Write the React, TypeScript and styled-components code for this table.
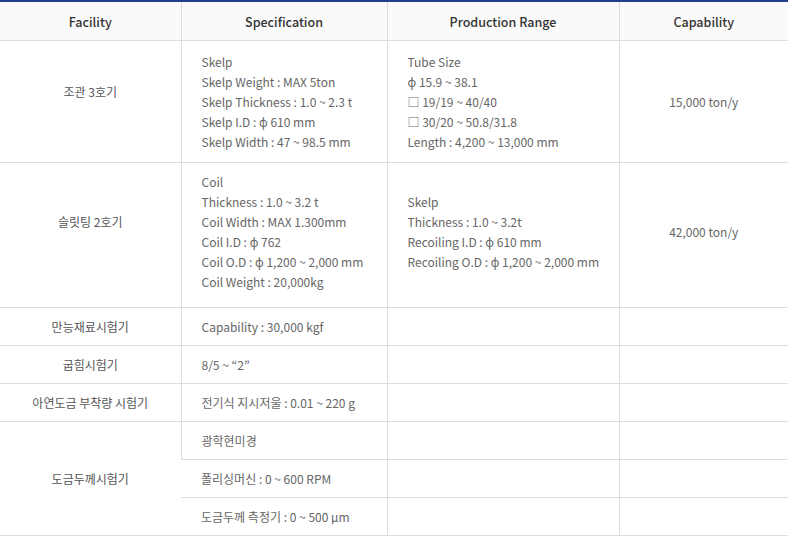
import React from "react";
import styled, { createGlobalStyle } from "styled-components";

const GlobalStyle = createGlobalStyle`
  html, body { margin: 0; padding: 0; background: #fff; }
  body { font-family: "Noto Sans CJK KR", "Noto Sans", sans-serif; }
`;

const Table = styled.table`
  width: 788px;
  border-collapse: collapse;
  table-layout: fixed;
  border-top: 2px solid #203f92;
  font-family: "Noto Sans CJK KR", "Noto Sans", sans-serif;
  font-size: 12px;
  color: #666;
`;

const Th = styled.th`
  height: 38px;
  padding: 0;
  background: #fafafa;
  color: #333;
  font-size: 12.5px;
  font-weight: 500;
  text-align: center;
  vertical-align: middle;
  border-bottom: 1px solid #ddd;
  border-left: 1px solid #ddd;
  &:first-child { border-left: none; }
`;

const Td = styled.td<{ $align?: "left" | "center"; $h?: number; $lift?: number }>`
  height: ${(p) => (p.$h ? `${p.$h}px` : "38px")};
  padding: 0 20px ${(p) => (p.$lift ? `${p.$lift * 2}px` : "0")};
  box-sizing: border-box;
  line-height: 20px;
  text-align: ${(p) => p.$align ?? "left"};
  vertical-align: middle;
  border-bottom: 1px solid #ddd;
  border-left: 1px solid #ddd;
  &:first-child { border-left: none; }
`;

const FacilityCell = styled(Td)`
  color: #555;
  text-align: center;
`;

const Line = styled.div`
  white-space: nowrap;
`;

const Lines = ({ items }: { items: string[] }) => (
  <>
    {items.map((t, i) => (
      <Line key={i}>{t}</Line>
    ))}
  </>
);

export default function App() {
  return (
    <>
      <GlobalStyle />
      <Table>
        <colgroup>
          <col style={{ width: 181 }} />
          <col style={{ width: 206 }} />
          <col style={{ width: 232 }} />
          <col style={{ width: 169 }} />
        </colgroup>
        <thead>
          <tr>
            <Th>Facility</Th>
            <Th>Specification</Th>
            <Th>Production Range</Th>
            <Th>Capability</Th>
          </tr>
        </thead>
        <tbody>
          <tr>
            <FacilityCell $h={122} $lift={10}>조관 3호기</FacilityCell>
            <Td>
              <Lines
                items={[
                  "Skelp",
                  "Skelp Weight : MAX 5ton",
                  "Skelp Thickness : 1.0 ~ 2.3 t",
                  "Skelp I.D : ϕ 610 mm",
                  "Skelp Width : 47 ~ 98.5 mm",
                ]}
              />
            </Td>
            <Td>
              <Lines
                items={[
                  "Tube Size",
                  "ϕ 15.9 ~ 38.1",
                  "□ 19/19 ~ 40/40",
                  "□ 30/20 ~ 50.8/31.8",
                  "Length : 4,200 ~ 13,000 mm",
                ]}
              />
            </Td>
            <Td $align="center">15,000 ton/y</Td>
          </tr>
          <tr>
            <FacilityCell $h={145} $lift={13}>슬릿팅 2호기</FacilityCell>
            <Td $lift={3}>
              <Lines
                items={[
                  "Coil",
                  "Thickness : 1.0 ~ 3.2 t",
                  "Coil Width : MAX 1.300mm",
                  "Coil I.D : ϕ 762",
                  "Coil O.D : ϕ 1,200 ~ 2,000 mm",
                  "Coil Weight : 20,000kg",
                ]}
              />
            </Td>
            <Td $lift={3}>
              <Lines
                items={[
                  "Skelp",
                  "Thickness : 1.0 ~ 3.2t",
                  "Recoiling I.D : ϕ 610 mm",
                  "Recoiling O.D : ϕ 1,200 ~ 2,000 mm",
                ]}
              />
            </Td>
            <Td $align="center" $lift={3}>42,000 ton/y</Td>
          </tr>
          <tr>
            <FacilityCell>만능재료시험기</FacilityCell>
            <Td>Capability : 30,000 kgf</Td>
            <Td />
            <Td />
          </tr>
          <tr>
            <FacilityCell>굽힘시험기</FacilityCell>
            <Td>8/5 ~ “2”</Td>
            <Td />
            <Td />
          </tr>
          <tr>
            <FacilityCell>아연도금 부착량 시험기</FacilityCell>
            <Td>전기식 지시저울 : 0.01 ~ 220 g</Td>
            <Td />
            <Td />
          </tr>
          <tr>
            <FacilityCell rowSpan={3}>도금두께시험기</FacilityCell>
            <Td>광학현미경</Td>
            <Td />
            <Td />
          </tr>
          <tr>
            <Td>폴리싱머신 : 0 ~ 600 RPM</Td>
            <Td />
            <Td />
          </tr>
          <tr>
            <Td>도금두께 측정기 : 0 ~ 500 μm</Td>
            <Td />
            <Td />
          </tr>
        </tbody>
      </Table>
    </>
  );
}
